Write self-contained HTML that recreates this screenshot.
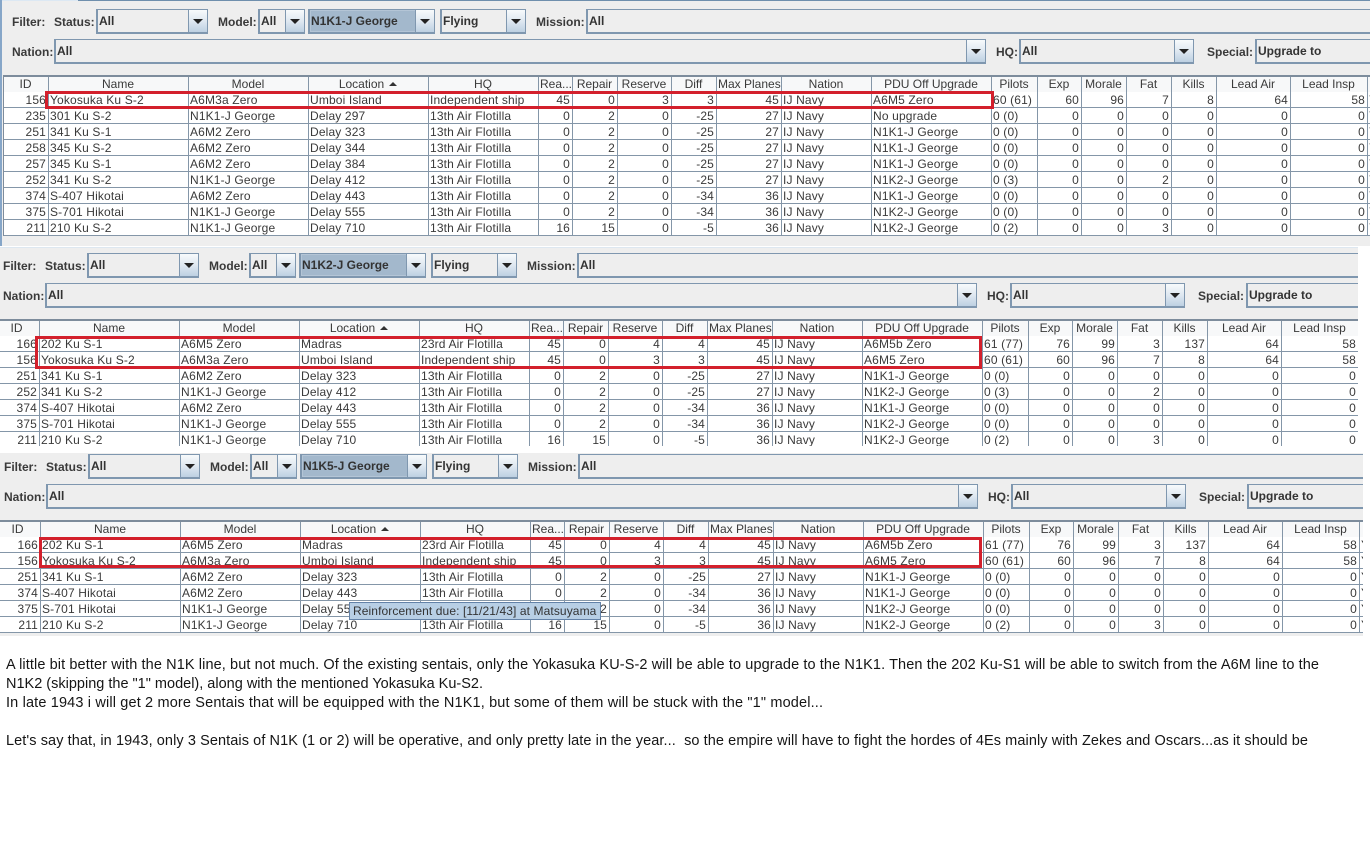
<!DOCTYPE html>
<html><head><meta charset="utf-8"><title>Air Groups</title>
<style>
html,body{margin:0;padding:0;background:#fff}
body{position:relative;width:1370px;height:856px;overflow:hidden;font-family:"Liberation Sans",sans-serif;color:#333}
.p{position:absolute;overflow:hidden;background:#eeeeee}
.i{position:absolute;width:1400px;height:260px}
.l{position:absolute;font:bold 12px/16px "Liberation Sans",sans-serif;color:#3a3a3a;white-space:nowrap}
.c{position:absolute;box-sizing:border-box;height:25px;border:1px solid #7f97af;border-width:1px 1px 2px 2px;background:#eee;font:bold 12px/23px "Liberation Sans",sans-serif;color:#333;padding-left:1px;white-space:nowrap;overflow:hidden}
.c.s{background:#a3b8cc;box-shadow:inset 0 0 0 1px #b4c5d6}
.b{position:absolute;right:0;top:0;width:18px;height:22px;border-left:1px solid #7f97af;background:linear-gradient(#f7fafc,#dfe8f1 50%,#bdd0e2)}
.b:after{content:"";position:absolute;left:4px;top:9px;border:5px solid transparent;border-top:5px solid #222;border-bottom:0}
table{position:absolute;left:3px;top:75px;width:1395px;table-layout:fixed;border-collapse:separate;border-spacing:0;border-top:2px solid #7d8c9c;border-left:1px solid #7d8c9c;background:#fff;font:12px/15px "Liberation Sans",sans-serif;color:#3a3a3a}
th,td{box-sizing:border-box;padding:0 2px 0 1px;overflow:hidden;white-space:nowrap;border-right:1px solid #8496a8;font-weight:normal}
th{height:15px;text-align:center;background:#f7f8f9;line-height:15px}
td{height:16px;line-height:14px;padding-top:1px;border-bottom:1px solid #8496a8;text-align:right;letter-spacing:.15px}
td:nth-child(2),td:nth-child(3),td:nth-child(4),td:nth-child(5),td:nth-child(11),td:nth-child(12),td:nth-child(13),td:nth-child(20){text-align:left}
.a{display:inline-block;vertical-align:2px;margin-left:5px;border:4px solid transparent;border-bottom:4px solid #333;border-top:0}
.r{position:absolute;box-sizing:border-box;border:3px solid #d3202c}
.t{position:absolute;left:349px;top:602px;width:252px;height:18px;box-sizing:border-box;background:#b8cfe5;border:1px solid #6382a8;font:12px/16px "Liberation Sans",sans-serif;color:#333;padding-left:3px;white-space:nowrap;letter-spacing:.1px}
svg{position:absolute;left:0;top:0}
svg text{font-family:"Liberation Sans",sans-serif;font-size:14.5px;fill:#151515;white-space:pre}
</style></head><body>

<div class="p" style="left:0;top:0;width:1370px;height:246px">
<div class="i" style="left:0;top:0">
<div style="position:absolute;left:78px;top:0;width:1300px;height:1px;background:#6f8fad"></div>
<div style="position:absolute;left:0;top:0;width:78px;height:1px;background:#dce8f3"></div>
<div style="position:absolute;left:0;top:0;width:2px;height:246px;background:#86a6c8"></div>
<span class="l" style="left:12px;top:14px">Filter:</span><span class="l" style="left:54px;top:14px">Status:</span>
<div class="c" style="left:96px;top:9px;width:112px">All<span class="b"></span></div>
<span class="l" style="left:218px;top:14px">Model:</span>
<div class="c" style="left:258px;top:9px;width:47px">All<span class="b"></span></div>
<div class="c s" style="left:308px;top:9px;width:127px">N1K1-J George<span class="b"></span></div>
<div class="c" style="left:440px;top:9px;width:86px">Flying<span class="b"></span></div>
<span class="l" style="left:536px;top:14px">Mission:</span>
<div class="c" style="left:586px;top:9px;width:840px">All</div>
<span class="l" style="left:12px;top:44px">Nation:</span>
<div class="c" style="left:54px;top:39px;width:932px">All<span class="b"></span></div>
<span class="l" style="left:996px;top:44px">HQ:</span>
<div class="c" style="left:1019px;top:39px;width:175px">All<span class="b"></span></div>
<span class="l" style="left:1207px;top:44px">Special:</span>
<div class="c" style="left:1255px;top:39px;width:180px">Upgrade to</div>
<table>
<colgroup><col style="width:45px"><col style="width:140px"><col style="width:120px"><col style="width:120px"><col style="width:110px"><col style="width:34px"><col style="width:45px"><col style="width:54px"><col style="width:45px"><col style="width:65px"><col style="width:90px"><col style="width:120px"><col style="width:46px"><col style="width:44px"><col style="width:45px"><col style="width:45px"><col style="width:45px"><col style="width:74px"><col style="width:77px"><col style="width:30px"></colgroup>
<tr><th>ID</th><th>Name</th><th>Model</th><th>Location<i class="a"></i></th><th>HQ</th><th>Rea...</th><th>Repair</th><th>Reserve</th><th>Diff</th><th>Max Planes</th><th>Nation</th><th>PDU Off Upgrade</th><th>Pilots</th><th>Exp</th><th>Morale</th><th>Fat</th><th>Kills</th><th>Lead Air</th><th>Lead Insp</th><th></th></tr>
<tr><td>156</td><td>Yokosuka Ku S-2</td><td>A6M3a Zero</td><td>Umboi Island</td><td>Independent ship</td><td>45</td><td>0</td><td>3</td><td>3</td><td>45</td><td>IJ Navy</td><td>A6M5 Zero</td><td>60 (61)</td><td>60</td><td>96</td><td>7</td><td>8</td><td>64</td><td>58</td><td>Y</td></tr>
<tr><td>235</td><td>301 Ku S-2</td><td>N1K1-J George</td><td>Delay 297</td><td>13th Air Flotilla</td><td>0</td><td>2</td><td>0</td><td>-25</td><td>27</td><td>IJ Navy</td><td>No upgrade</td><td>0 (0)</td><td>0</td><td>0</td><td>0</td><td>0</td><td>0</td><td>0</td><td>Y</td></tr>
<tr><td>251</td><td>341 Ku S-1</td><td>A6M2 Zero</td><td>Delay 323</td><td>13th Air Flotilla</td><td>0</td><td>2</td><td>0</td><td>-25</td><td>27</td><td>IJ Navy</td><td>N1K1-J George</td><td>0 (0)</td><td>0</td><td>0</td><td>0</td><td>0</td><td>0</td><td>0</td><td>Y</td></tr>
<tr><td>258</td><td>345 Ku S-2</td><td>A6M2 Zero</td><td>Delay 344</td><td>13th Air Flotilla</td><td>0</td><td>2</td><td>0</td><td>-25</td><td>27</td><td>IJ Navy</td><td>N1K1-J George</td><td>0 (0)</td><td>0</td><td>0</td><td>0</td><td>0</td><td>0</td><td>0</td><td>Y</td></tr>
<tr><td>257</td><td>345 Ku S-1</td><td>A6M2 Zero</td><td>Delay 384</td><td>13th Air Flotilla</td><td>0</td><td>2</td><td>0</td><td>-25</td><td>27</td><td>IJ Navy</td><td>N1K1-J George</td><td>0 (0)</td><td>0</td><td>0</td><td>0</td><td>0</td><td>0</td><td>0</td><td>Y</td></tr>
<tr><td>252</td><td>341 Ku S-2</td><td>N1K1-J George</td><td>Delay 412</td><td>13th Air Flotilla</td><td>0</td><td>2</td><td>0</td><td>-25</td><td>27</td><td>IJ Navy</td><td>N1K2-J George</td><td>0 (3)</td><td>0</td><td>0</td><td>2</td><td>0</td><td>0</td><td>0</td><td>Y</td></tr>
<tr><td>374</td><td>S-407 Hikotai</td><td>A6M2 Zero</td><td>Delay 443</td><td>13th Air Flotilla</td><td>0</td><td>2</td><td>0</td><td>-34</td><td>36</td><td>IJ Navy</td><td>N1K1-J George</td><td>0 (0)</td><td>0</td><td>0</td><td>0</td><td>0</td><td>0</td><td>0</td><td>Y</td></tr>
<tr><td>375</td><td>S-701 Hikotai</td><td>N1K1-J George</td><td>Delay 555</td><td>13th Air Flotilla</td><td>0</td><td>2</td><td>0</td><td>-34</td><td>36</td><td>IJ Navy</td><td>N1K2-J George</td><td>0 (0)</td><td>0</td><td>0</td><td>0</td><td>0</td><td>0</td><td>0</td><td>Y</td></tr>
<tr><td>211</td><td>210 Ku S-2</td><td>N1K1-J George</td><td>Delay 710</td><td>13th Air Flotilla</td><td>16</td><td>15</td><td>0</td><td>-5</td><td>36</td><td>IJ Navy</td><td>N1K2-J George</td><td>0 (2)</td><td>0</td><td>0</td><td>3</td><td>0</td><td>0</td><td>0</td><td>Y</td></tr>
</table>
<div class="r" style="left:45px;top:91px;width:949px;height:18px"></div>
</div></div>

<div class="p" style="left:0;top:247px;width:1358px;height:199px">
<div style="position:absolute;left:0;top:0;width:1358px;height:1px;background:#dde7f0"></div>
<div class="i" style="left:-9px;top:-3px">
<span class="l" style="left:12px;top:14px">Filter:</span><span class="l" style="left:54px;top:14px">Status:</span>
<div class="c" style="left:96px;top:9px;width:112px">All<span class="b"></span></div>
<span class="l" style="left:218px;top:14px">Model:</span>
<div class="c" style="left:258px;top:9px;width:47px">All<span class="b"></span></div>
<div class="c s" style="left:308px;top:9px;width:127px">N1K2-J George<span class="b"></span></div>
<div class="c" style="left:440px;top:9px;width:86px">Flying<span class="b"></span></div>
<span class="l" style="left:536px;top:14px">Mission:</span>
<div class="c" style="left:586px;top:9px;width:840px">All</div>
<span class="l" style="left:12px;top:44px">Nation:</span>
<div class="c" style="left:54px;top:39px;width:932px">All<span class="b"></span></div>
<span class="l" style="left:996px;top:44px">HQ:</span>
<div class="c" style="left:1019px;top:39px;width:175px">All<span class="b"></span></div>
<span class="l" style="left:1207px;top:44px">Special:</span>
<div class="c" style="left:1255px;top:39px;width:180px">Upgrade to</div>
<table>
<colgroup><col style="width:45px"><col style="width:140px"><col style="width:120px"><col style="width:120px"><col style="width:110px"><col style="width:34px"><col style="width:45px"><col style="width:54px"><col style="width:45px"><col style="width:65px"><col style="width:90px"><col style="width:120px"><col style="width:46px"><col style="width:44px"><col style="width:45px"><col style="width:45px"><col style="width:45px"><col style="width:74px"><col style="width:77px"><col style="width:30px"></colgroup>
<tr><th>ID</th><th>Name</th><th>Model</th><th>Location<i class="a"></i></th><th>HQ</th><th>Rea...</th><th>Repair</th><th>Reserve</th><th>Diff</th><th>Max Planes</th><th>Nation</th><th>PDU Off Upgrade</th><th>Pilots</th><th>Exp</th><th>Morale</th><th>Fat</th><th>Kills</th><th>Lead Air</th><th>Lead Insp</th><th></th></tr>
<tr><td>166</td><td>202 Ku S-1</td><td>A6M5 Zero</td><td>Madras</td><td>23rd Air Flotilla</td><td>45</td><td>0</td><td>4</td><td>4</td><td>45</td><td>IJ Navy</td><td>A6M5b Zero</td><td>61 (77)</td><td>76</td><td>99</td><td>3</td><td>137</td><td>64</td><td>58</td><td>Y</td></tr>
<tr><td>156</td><td>Yokosuka Ku S-2</td><td>A6M3a Zero</td><td>Umboi Island</td><td>Independent ship</td><td>45</td><td>0</td><td>3</td><td>3</td><td>45</td><td>IJ Navy</td><td>A6M5 Zero</td><td>60 (61)</td><td>60</td><td>96</td><td>7</td><td>8</td><td>64</td><td>58</td><td>Y</td></tr>
<tr><td>251</td><td>341 Ku S-1</td><td>A6M2 Zero</td><td>Delay 323</td><td>13th Air Flotilla</td><td>0</td><td>2</td><td>0</td><td>-25</td><td>27</td><td>IJ Navy</td><td>N1K1-J George</td><td>0 (0)</td><td>0</td><td>0</td><td>0</td><td>0</td><td>0</td><td>0</td><td>Y</td></tr>
<tr><td>252</td><td>341 Ku S-2</td><td>N1K1-J George</td><td>Delay 412</td><td>13th Air Flotilla</td><td>0</td><td>2</td><td>0</td><td>-25</td><td>27</td><td>IJ Navy</td><td>N1K2-J George</td><td>0 (3)</td><td>0</td><td>0</td><td>2</td><td>0</td><td>0</td><td>0</td><td>Y</td></tr>
<tr><td>374</td><td>S-407 Hikotai</td><td>A6M2 Zero</td><td>Delay 443</td><td>13th Air Flotilla</td><td>0</td><td>2</td><td>0</td><td>-34</td><td>36</td><td>IJ Navy</td><td>N1K1-J George</td><td>0 (0)</td><td>0</td><td>0</td><td>0</td><td>0</td><td>0</td><td>0</td><td>Y</td></tr>
<tr><td>375</td><td>S-701 Hikotai</td><td>N1K1-J George</td><td>Delay 555</td><td>13th Air Flotilla</td><td>0</td><td>2</td><td>0</td><td>-34</td><td>36</td><td>IJ Navy</td><td>N1K2-J George</td><td>0 (0)</td><td>0</td><td>0</td><td>0</td><td>0</td><td>0</td><td>0</td><td>Y</td></tr>
<tr><td>211</td><td>210 Ku S-2</td><td>N1K1-J George</td><td>Delay 710</td><td>13th Air Flotilla</td><td>16</td><td>15</td><td>0</td><td>-5</td><td>36</td><td>IJ Navy</td><td>N1K2-J George</td><td>0 (2)</td><td>0</td><td>0</td><td>3</td><td>0</td><td>0</td><td>0</td><td>Y</td></tr>
</table>
</div></div>
<div class="r" style="left:35px;top:336px;width:947px;height:33px"></div>

<div class="p" style="left:0;top:453px;width:1363px;height:183px">
<div class="i" style="left:-8px;top:-8px">
<span class="l" style="left:12px;top:14px">Filter:</span><span class="l" style="left:54px;top:14px">Status:</span>
<div class="c" style="left:96px;top:9px;width:112px">All<span class="b"></span></div>
<span class="l" style="left:218px;top:14px">Model:</span>
<div class="c" style="left:258px;top:9px;width:47px">All<span class="b"></span></div>
<div class="c s" style="left:308px;top:9px;width:127px">N1K5-J George<span class="b"></span></div>
<div class="c" style="left:440px;top:9px;width:86px">Flying<span class="b"></span></div>
<span class="l" style="left:536px;top:14px">Mission:</span>
<div class="c" style="left:586px;top:9px;width:840px">All</div>
<span class="l" style="left:12px;top:44px">Nation:</span>
<div class="c" style="left:54px;top:39px;width:932px">All<span class="b"></span></div>
<span class="l" style="left:996px;top:44px">HQ:</span>
<div class="c" style="left:1019px;top:39px;width:175px">All<span class="b"></span></div>
<span class="l" style="left:1207px;top:44px">Special:</span>
<div class="c" style="left:1255px;top:39px;width:180px">Upgrade to</div>
<table>
<colgroup><col style="width:45px"><col style="width:140px"><col style="width:120px"><col style="width:120px"><col style="width:110px"><col style="width:34px"><col style="width:45px"><col style="width:54px"><col style="width:45px"><col style="width:65px"><col style="width:90px"><col style="width:120px"><col style="width:46px"><col style="width:44px"><col style="width:45px"><col style="width:45px"><col style="width:45px"><col style="width:74px"><col style="width:77px"><col style="width:30px"></colgroup>
<tr><th>ID</th><th>Name</th><th>Model</th><th>Location<i class="a"></i></th><th>HQ</th><th>Rea...</th><th>Repair</th><th>Reserve</th><th>Diff</th><th>Max Planes</th><th>Nation</th><th>PDU Off Upgrade</th><th>Pilots</th><th>Exp</th><th>Morale</th><th>Fat</th><th>Kills</th><th>Lead Air</th><th>Lead Insp</th><th></th></tr>
<tr><td>166</td><td>202 Ku S-1</td><td>A6M5 Zero</td><td>Madras</td><td>23rd Air Flotilla</td><td>45</td><td>0</td><td>4</td><td>4</td><td>45</td><td>IJ Navy</td><td>A6M5b Zero</td><td>61 (77)</td><td>76</td><td>99</td><td>3</td><td>137</td><td>64</td><td>58</td><td>Y</td></tr>
<tr><td>156</td><td>Yokosuka Ku S-2</td><td>A6M3a Zero</td><td>Umboi Island</td><td>Independent ship</td><td>45</td><td>0</td><td>3</td><td>3</td><td>45</td><td>IJ Navy</td><td>A6M5 Zero</td><td>60 (61)</td><td>60</td><td>96</td><td>7</td><td>8</td><td>64</td><td>58</td><td>Y</td></tr>
<tr><td>251</td><td>341 Ku S-1</td><td>A6M2 Zero</td><td>Delay 323</td><td>13th Air Flotilla</td><td>0</td><td>2</td><td>0</td><td>-25</td><td>27</td><td>IJ Navy</td><td>N1K1-J George</td><td>0 (0)</td><td>0</td><td>0</td><td>0</td><td>0</td><td>0</td><td>0</td><td>Y</td></tr>
<tr><td>374</td><td>S-407 Hikotai</td><td>A6M2 Zero</td><td>Delay 443</td><td>13th Air Flotilla</td><td>0</td><td>2</td><td>0</td><td>-34</td><td>36</td><td>IJ Navy</td><td>N1K1-J George</td><td>0 (0)</td><td>0</td><td>0</td><td>0</td><td>0</td><td>0</td><td>0</td><td>Y</td></tr>
<tr><td>375</td><td>S-701 Hikotai</td><td>N1K1-J George</td><td>Delay 555</td><td>13th Air Flotilla</td><td>0</td><td>2</td><td>0</td><td>-34</td><td>36</td><td>IJ Navy</td><td>N1K2-J George</td><td>0 (0)</td><td>0</td><td>0</td><td>0</td><td>0</td><td>0</td><td>0</td><td>Y</td></tr>
<tr><td>211</td><td>210 Ku S-2</td><td>N1K1-J George</td><td>Delay 710</td><td>13th Air Flotilla</td><td>16</td><td>15</td><td>0</td><td>-5</td><td>36</td><td>IJ Navy</td><td>N1K2-J George</td><td>0 (2)</td><td>0</td><td>0</td><td>3</td><td>0</td><td>0</td><td>0</td><td>Y</td></tr>
</table>
</div></div>
<div class="r" style="left:39px;top:537px;width:943px;height:31px"></div>
<div class="t">Reinforcement due: [11/21/43] at Matsuyama</div>

<svg width="1370" height="856" style="pointer-events:none">
<text x="6" y="669" textLength="1313" lengthAdjust="spacing">A little bit better with the N1K line, but not much. Of the existing sentais, only the Yokasuka KU-S-2 will be able to upgrade to the N1K1. Then the 202 Ku-S1 will be able to switch from the A6M line to the</text>
<text x="6" y="688" textLength="477" lengthAdjust="spacing">N1K2 (skipping the "1" model), along with the mentioned Yokasuka Ku-S2.</text>
<text x="6" y="707" textLength="817" lengthAdjust="spacing">In late 1943 i will get 2 more Sentais that will be equipped with the N1K1, but some of them will be stuck with the "1" model...</text>
<text x="6" y="745" textLength="1302" lengthAdjust="spacing">Let's say that, in 1943, only 3 Sentais of N1K (1 or 2) will be operative, and only pretty late in the year...  so the empire will have to fight the hordes of 4Es mainly with Zekes and Oscars...as it should be</text>
</svg>
</body></html>
